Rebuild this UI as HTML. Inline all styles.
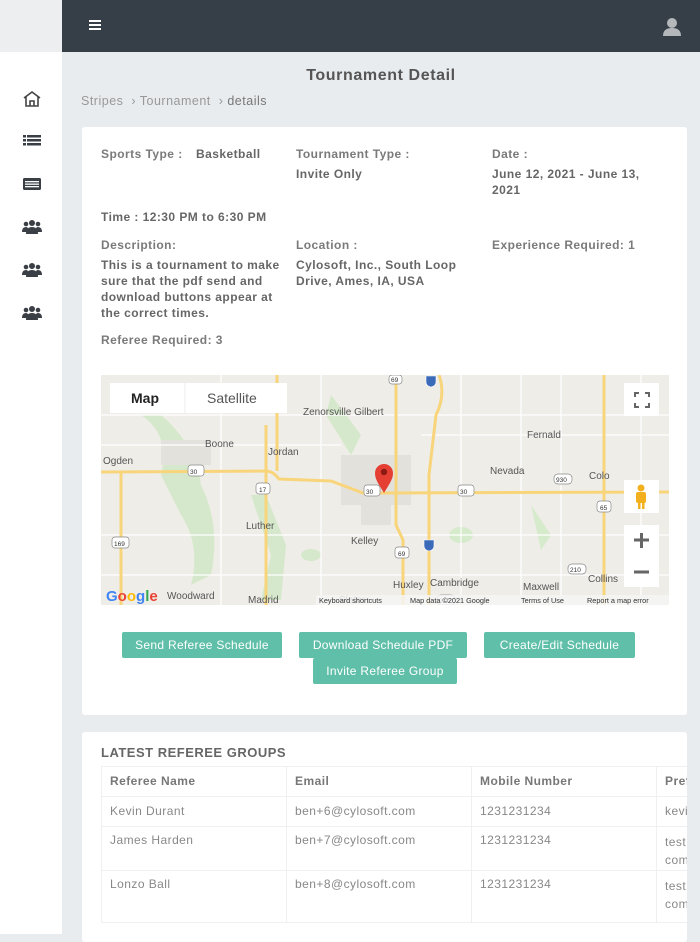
<!DOCTYPE html>
<html><head><meta charset="utf-8"><style>
*{box-sizing:border-box;margin:0;padding:0}
body{width:700px;height:934px;overflow:hidden;background:#e9ecef;font-family:"Liberation Sans",sans-serif;position:relative;color:#6f6f6f}
.topl{position:absolute;left:0;top:0;width:62px;height:52px;background:#eceef0}
.hdr{position:absolute;left:62px;top:0;width:638px;height:52px;background:#363f48}
.side{position:absolute;left:0;top:52px;width:62px;height:882px;background:#fff}
.ic{position:absolute;left:22px;width:20px;height:18px}
h1{position:absolute;left:62px;width:638px;top:67px;text-align:center;font-size:16px;letter-spacing:.6px;font-weight:bold;color:#555}
.bc{position:absolute;left:81px;top:94px;font-size:12.5px;letter-spacing:.5px;color:#999}
.bc b{color:#777;font-weight:normal}
.card{position:absolute;left:82px;background:#fff;border-radius:3px;width:605px}
.t{position:absolute;font-size:12px;letter-spacing:.45px;font-weight:bold;color:#7a7a7a;line-height:16px}
.v{color:#666}
.btn{position:absolute;height:26px;background:#5fbfa8;color:#fff;font-size:12px;letter-spacing:.3px;line-height:26px;text-align:center;border-radius:2px;white-space:nowrap}
table{position:absolute;left:19px;top:34px;border-collapse:collapse;font-size:12px;letter-spacing:.45px;color:#888;table-layout:fixed;width:740px}
td,th{border:1px solid #eef0f2;text-align:left;vertical-align:top;padding:0 8px;white-space:nowrap;overflow:hidden}
th{height:29px;line-height:29px;color:#777;font-weight:bold}
</style></head><body>
<div class="topl"></div>
<div class="hdr">
 <div style="position:absolute;left:27px;top:20px;width:12px;height:2px;background:#fff;box-shadow:0 4px 0 #fff,0 8px 0 #fff"></div>
 <svg style="position:absolute;left:600px;top:17px" width="20" height="20" viewBox="0 0 20 20"><circle cx="10" cy="6" r="5" fill="#b5b8bb"/><path d="M1 19 Q1 11 10 11 Q19 11 19 19Z" fill="#b5b8bb"/></svg>
</div>
<div class="side">
 <svg class="ic" style="top:38px" viewBox="0 0 20 18"><path d="M2 8 L10 2 L18 8 M4 7 V16 H16 V7 M8 16 V11 H12 V16" fill="none" stroke="#444" stroke-width="1.6"/></svg>
 <svg class="ic" style="top:80px" viewBox="0 0 20 18"><g fill="#3a3f45"><rect x="1" y="3" width="3" height="2.5"/><rect x="5" y="3" width="14" height="2.5"/><rect x="1" y="7" width="3" height="2.5"/><rect x="5" y="7" width="14" height="2.5"/><rect x="1" y="11" width="3" height="2.5"/><rect x="5" y="11" width="14" height="2.5"/></g></svg>
 <svg class="ic" style="top:123px" viewBox="0 0 20 18"><rect x="1" y="3" width="18" height="12" rx="1.5" fill="#3a3f45"/><g fill="#fff"><rect x="3" y="6" width="14" height="1.3"/><rect x="3" y="8.5" width="14" height="1.3"/><rect x="3" y="11" width="14" height="1.3"/></g></svg>
 <svg class="ic" style="top:166px" viewBox="0 0 20 18"><g fill="#3a3f45"><circle cx="10" cy="5" r="3"/><circle cx="4" cy="6" r="2.3"/><circle cx="16" cy="6" r="2.3"/><path d="M4 16 Q4 9 10 9 Q16 9 16 16Z"/><path d="M0 14 Q0 9 4 9 Q6 9 6 11 V14Z"/><path d="M20 14 Q20 9 16 9 Q14 9 14 11 V14Z"/></g></svg>
 <svg class="ic" style="top:209px" viewBox="0 0 20 18"><g fill="#3a3f45"><circle cx="10" cy="5" r="3"/><circle cx="4" cy="6" r="2.3"/><circle cx="16" cy="6" r="2.3"/><path d="M4 16 Q4 9 10 9 Q16 9 16 16Z"/><path d="M0 14 Q0 9 4 9 Q6 9 6 11 V14Z"/><path d="M20 14 Q20 9 16 9 Q14 9 14 11 V14Z"/></g></svg>
 <svg class="ic" style="top:252px" viewBox="0 0 20 18"><g fill="#3a3f45"><circle cx="10" cy="5" r="3"/><circle cx="4" cy="6" r="2.3"/><circle cx="16" cy="6" r="2.3"/><path d="M4 16 Q4 9 10 9 Q16 9 16 16Z"/><path d="M0 14 Q0 9 4 9 Q6 9 6 11 V14Z"/><path d="M20 14 Q20 9 16 9 Q14 9 14 11 V14Z"/></g></svg>
</div>
<h1>Tournament Detail</h1>
<div class="bc">Stripes &nbsp;› Tournament &nbsp;› <b>details</b></div>

<div class="card" style="top:127px;height:588px">
 <div class="t" style="left:19px;top:19px">Sports Type :</div>
 <div class="t v" style="left:114px;top:19px">Basketball</div>
 <div class="t" style="left:214px;top:19px">Tournament Type :</div>
 <div class="t v" style="left:214px;top:39px">Invite Only</div>
 <div class="t" style="left:410px;top:19px">Date :</div>
 <div class="t v" style="left:410px;top:39px;width:172px">June 12, 2021 - June 13, 2021</div>
 <div class="t v" style="left:19px;top:82px">Time : 12:30 PM to 6:30 PM</div>
 <div class="t" style="left:19px;top:110px">Description:</div>
 <div class="t v" style="left:19px;top:130px;width:184px">This is a tournament to make sure that the pdf send and download buttons appear at the correct times.</div>
 <div class="t" style="left:214px;top:110px">Location :</div>
 <div class="t v" style="left:214px;top:130px;width:175px">Cylosoft, Inc., South Loop Drive, Ames, IA, USA</div>
 <div class="t" style="left:410px;top:110px">Experience Required: 1</div>
 <div class="t" style="left:19px;top:205px">Referee Required: 3</div>

 <svg style="position:absolute;left:19px;top:248px" width="568" height="230" viewBox="0 0 568 230" font-family="Liberation Sans,sans-serif">
  <rect width="568" height="230" fill="#efede8"/>
  <g fill="#cfe8c4" opacity=".8">
   <path d="M40 40 Q70 60 60 100 L80 140 Q100 170 90 210 L110 200 Q120 150 100 110 Q95 70 60 40Z"/>
   <path d="M150 120 L170 180 L160 225 L180 225 L185 170 L165 120Z"/>
   <ellipse cx="210" cy="180" rx="10" ry="6"/><ellipse cx="360" cy="160" rx="12" ry="8"/>
   <path d="M230 20 L260 60 L250 80 L225 40Z"/><path d="M430 130 L450 160 L440 175Z"/>
  </g>
  <g fill="#e3e1dc"><rect x="240" y="80" width="70" height="50"/><rect x="60" y="65" width="50" height="25"/><rect x="260" y="130" width="30" height="20"/></g>
  <g stroke="#fff" stroke-width="1.2" fill="none">
   <path d="M0 40 H568 M0 160 H568 M0 200 H568 M120 0 V230 M220 0 V230 M360 0 V230 M420 0 V230 M460 0 V230 M540 0 V230 M0 70 H240 M320 60 H568"/>
  </g>
  <g stroke="#f8d57b" stroke-width="3" fill="none">
   <path d="M0 97 L165 96 Q172 96 178 104 L230 106 L262 118 L568 117"/>
   <path d="M20 97 V230"/><path d="M165 50 V230"/><path d="M176 0 V96"/>
   <path d="M295 0 V150 L302 165 V230"/>
   <path d="M338 0 Q345 20 335 40 L328 100 V230"/>
   <path d="M503 0 V230"/>
  </g>
  <g fill="#555" font-size="10" >
   <text x="202" y="40">Zenorsville Gilbert</text><text x="426" y="63">Fernald</text>
   <text x="104" y="72">Boone</text><text x="167" y="80">Jordan</text><text x="2" y="89">Ogden</text>
   <text x="389" y="99">Nevada</text><text x="488" y="104">Colo</text><text x="145" y="154">Luther</text>
   <text x="250" y="169">Kelley</text><text x="292" y="213">Huxley</text><text x="329" y="211">Cambridge</text>
   <text x="422" y="215">Maxwell</text><text x="487" y="207">Collins</text><text x="147" y="228">Madrid</text>
   <text x="238" y="228">Slater</text><text x="66" y="224">Woodward</text>
  </g>
  <g font-size="7" fill="#333" stroke="#888" stroke-width=".7">
   <rect x="87" y="90" width="16" height="11" rx="3" fill="#fff"/><rect x="155" y="108" width="14" height="11" rx="3" fill="#fff"/>
   <rect x="263" y="110" width="16" height="11" rx="3" fill="#fff"/><rect x="357" y="110" width="16" height="11" rx="3" fill="#fff"/>
   <rect x="453" y="99" width="18" height="10" rx="4" fill="#fff"/><rect x="11" y="162" width="17" height="11" rx="3" fill="#fff"/>
   <rect x="294" y="172" width="14" height="11" rx="3" fill="#fff"/><rect x="336" y="220" width="18" height="10" rx="4" fill="#fff"/>
   <rect x="467" y="189" width="18" height="10" rx="4" fill="#fff"/><rect x="496" y="126" width="14" height="11" rx="3" fill="#fff"/>
   <rect x="288" y="0" width="13" height="9" rx="3" fill="#fff"/>
  </g>
  <g font-size="6.5" fill="#333"><text x="89" y="99">30</text><text x="158" y="117">17</text><text x="265" y="119">30</text><text x="359" y="119">30</text><text x="455" y="107">930</text><text x="13" y="171">169</text><text x="297" y="181">69</text><text x="338" y="228">210</text><text x="469" y="197">210</text><text x="499" y="135">65</text><text x="290" y="7">69</text></g>
  <path d="M325 1 h10 v6 q0 4 -5 5 q-5 -1 -5 -5z M323 165 h10 v6 q0 4 -5 5 q-5 -1 -5 -5z" fill="#3a6ab8" stroke="#fff" stroke-width=".6"/>
  <path d="M283 118 C277 108 274 104 274 98 A9 9 0 0 1 292 98 C292 104 289 108 283 118Z" fill="#e53f33"/><circle cx="283" cy="97" r="3.2" fill="#8a1a12"/>
  <rect x="9" y="8" width="177" height="30" fill="#fff"/><line x1="84" y1="8" x2="84" y2="38" stroke="#eee"/>
  <text x="30" y="28" font-size="14" font-weight="bold" fill="#222">Map</text><text x="106" y="28" font-size="14" fill="#555">Satellite</text>
  <rect x="523" y="8" width="35" height="33" fill="#fff"/><path d="M534 22 v-4 h4 M544 18 h4 v4 M548 28 v4 h-4 M538 32 h-4 v-4" stroke="#666" stroke-width="2" fill="none"/>
  <rect x="523" y="105" width="35" height="33" fill="#fff"/><circle cx="540" cy="113" r="3.5" fill="#f2b01e"/><rect x="535" y="117" width="10" height="11" rx="2" fill="#f2b01e"/><rect x="537" y="127" width="2.5" height="7" fill="#f2b01e"/><rect x="541" y="127" width="2.5" height="7" fill="#f2b01e"/>
  <rect x="523" y="150" width="35" height="62" fill="#fff"/><path d="M533 165 h15 M540.5 158 v15 M533 197 h15" stroke="#666" stroke-width="3"/>
  <text x="5" y="226" font-size="15" font-weight="bold"><tspan fill="#4285f4">G</tspan><tspan fill="#ea4335">o</tspan><tspan fill="#fbbc05">o</tspan><tspan fill="#4285f4">g</tspan><tspan fill="#34a853">l</tspan><tspan fill="#ea4335">e</tspan></text>
  <rect x="215" y="220" width="353" height="10" fill="#f5f5f5" opacity=".85"/>
  <text x="218" y="228" font-size="7.3" fill="#333">Keyboard shortcuts</text><text x="309" y="228" font-size="7.3" fill="#333">Map data ©2021 Google</text><text x="420" y="228" font-size="7.3" fill="#333">Terms of Use</text><text x="486" y="228" font-size="7.3" fill="#333">Report a map error</text>
 </svg>

 <div class="btn" style="left:40px;top:505px;width:160px">Send Referee Schedule</div>
 <div class="btn" style="left:217px;top:505px;width:168px">Download Schedule PDF</div>
 <div class="btn" style="left:402px;top:505px;width:151px">Create/Edit Schedule</div>
 <div class="btn" style="left:231px;top:531px;width:144px">Invite Referee Group</div>
</div>

<div class="card" style="top:732px;height:210px;overflow:hidden">
 <div style="position:absolute;left:19px;top:13px;font-size:13px;letter-spacing:.5px;font-weight:bold;color:#666">LATEST REFEREE GROUPS</div>
 <table>
  <colgroup><col style="width:185px"><col style="width:185px"><col style="width:185px"><col style="width:185px"></colgroup>
  <tr><th>Referee Name</th><th>Email</th><th>Mobile Number</th><th>Preferences</th></tr>
  <tr style="height:29px"><td style="line-height:29px">Kevin Durant</td><td style="line-height:29px">ben+6@cylosoft.com</td><td style="line-height:29px">1231231234</td><td style="line-height:29px">kevin comment</td></tr>
  <tr style="height:44px"><td style="padding-top:6px">James Harden</td><td style="padding-top:6px">ben+7@cylosoft.com</td><td style="padding-top:6px">1231231234</td><td style="padding-top:6px;line-height:18px">test<br>comment</td></tr>
  <tr style="height:52px"><td style="padding-top:6px">Lonzo Ball</td><td style="padding-top:6px">ben+8@cylosoft.com</td><td style="padding-top:6px">1231231234</td><td style="padding-top:6px;line-height:18px">test<br>comment</td></tr>
 </table>
</div>
</body></html>
